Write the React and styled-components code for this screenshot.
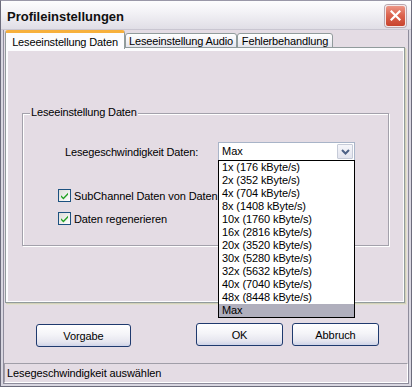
import React from 'react';
import styled, { createGlobalStyle } from 'styled-components';

const LAV = '#e4dce4';
const FONT = '"Liberation Sans", Arial, sans-serif';

const Global = createGlobalStyle`
  html, body { margin: 0; padding: 0; background: #ffffff; }
  body { font-family: ${FONT}; font-size: 11px; color: #000; }
  * { box-sizing: border-box; }
`;

const Window = styled.div`
  width: 412px;
  height: 387px;
  display: flex;
  flex-direction: column;
  border: 1px solid #6c6c7c;
  border-top-color: #9a98a8;
  background: #d8d6e0;
  padding: 0 2px 2px;
`;

const TitleBar = styled.div`
  height: 29px;
  margin: 0 -2px;
  display: flex;
  align-items: center;
  justify-content: space-between;
  padding: 0 5px 0 6px;
  background: linear-gradient(#fdfdfe 0%, #f3f2f6 40%, #e0dee6 100%);
  border-bottom: 1px solid #c9c6d1;
`;

const Title = styled.div`
  font-family: ${FONT};
  font-weight: bold;
  font-size: 13px;
  color: #101010;
  padding-top: 2px;
`;

const CloseButton = styled.div`
  width: 21px;
  height: 22px;
  margin-top: 1px;
  border-radius: 3px;
  border: 1px solid #f4e8e8;
  box-shadow: 0 0 0 1px #b9a8b0;
  background: linear-gradient(#ec9686 0%, #dc6550 45%, #c8432d 100%);
  display: flex;
  align-items: center;
  justify-content: center;
`;

const Body = styled.div`
  flex: 1;
  display: flex;
  flex-direction: column;
  background: ${LAV};
  border: 1px solid #8e8c9c;
  border-top: none;
`;

const TabRow = styled.div`
  height: 18px;
  display: flex;
  align-items: flex-end;
  padding-left: 1px;
  position: relative;
  z-index: 2;
`;

const Tab = styled.div`
  width: ${p => p.$w}px;
  height: ${p => (p.$active ? 19 : 15)}px;
  margin-bottom: ${p => (p.$active ? -1 : 0)}px;
  display: flex;
  align-items: center;
  justify-content: center;
  padding-top: ${p => (p.$active ? 2 : 1)}px;
  border: 1px solid #919b9c;
  border-bottom: ${p => (p.$active ? 'none' : '1px solid #919b9c')};
  border-top: ${p => (p.$active ? '3px solid #f7b03c' : '1px solid #919b9c')};
  border-radius: 3px 3px 0 0;
  background: ${p => (p.$active ? '#fcfcfe' : 'linear-gradient(#ffffff, #f3f3f7 50%, #e4e4ec)')};
  white-space: nowrap;
  letter-spacing: -0.15px;
`;

const Panel = styled.div`
  width: 400px;
  height: 256px;
  margin: -1px 0 0 1px;
  border: 1px solid #919b9c;
  background: #fcfcfe;
  padding: 3px 1px 1px 2px;
  box-shadow: 1px 1px 0 #d2d0b8, 2px 2px 0 #e2e0d2;
  display: flex;
  position: relative;
  z-index: 1;
`;

const PanelInner = styled.div`
  flex: 1;
  background: ${LAV};
  padding: 62px 0 0 14px;
`;

const GroupBox = styled.div`
  position: relative;
  width: 367px;
  height: 133px;
  border: 1px solid #a3a1ab;
  box-shadow: 1px 1px 0 #ffffff, inset 1px 1px 0 #ffffff;
  display: flex;
  flex-direction: column;
  padding: 28px 0 0 0;
`;

const GroupLegend = styled.div`
  position: absolute;
  left: 7px;
  top: -8px;
  padding: 0 1px;
  background: ${LAV};
  line-height: 13px;
  letter-spacing: -0.15px;
`;

const FieldRow = styled.div`
  display: flex;
  align-items: center;
  height: 19px;
  padding-left: 42px;
`;

const FieldLabel = styled.div`
  width: 153px;
  letter-spacing: -0.15px;
  padding-top: 1px;
`;

const Combo = styled.div`
  position: relative;
  width: 137px;
  height: 19px;
  border: 1px solid #a8b4c8;
  background: #fff;
  display: flex;
  align-items: center;
  padding: 1px;
  z-index: 5;
`;

const ComboValue = styled.div`
  flex: 1;
  padding-left: 2px;
  line-height: 15px;
`;

const ComboButton = styled.div`
  width: 16px;
  height: 15px;
  border: 1px solid #c6cbd8;
  border-radius: 1px;
  background: linear-gradient(#f6f6fa, #e2e4ee);
  display: flex;
  align-items: center;
  justify-content: center;
`;

const List = styled.div`
  position: absolute;
  top: 17px;
  left: -1px;
  width: 137px;
  border: 1px solid #000;
  background: #fff;
  padding: 0;
`;

const ListItem = styled.div`
  height: 13px;
  line-height: 13px;
  padding-left: 3px;
  white-space: nowrap;
  letter-spacing: -0.1px;
  background: ${p => (p.$selected ? '#b0afbd' : 'transparent')};
`;

const CheckRow = styled.div`
  display: flex;
  align-items: center;
  height: 13px;
  padding-left: 35px;
  margin-top: ${p => p.$mt}px;
  white-space: nowrap;
  letter-spacing: -0.1px;
`;

const CheckBox = styled.div`
  width: 13px;
  height: 13px;
  flex: none;
  border: 1px solid #1c5180;
  background: linear-gradient(135deg, #dcdcd7, #ffffff);
  display: flex;
  align-items: center;
  justify-content: center;
  margin-right: 3px;
`;

const ButtonRow = styled.div`
  display: flex;
  align-items: flex-start;
  margin-top: 20px;
  height: 24px;
  padding-left: 32px;
`;

const Button = styled.div`
  width: ${p => p.$w}px;
  height: 23px;
  margin-top: ${p => p.$mt || 0}px;
  margin-right: ${p => p.$mr || 0}px;
  border: 1px solid #1f3a6e;
  border-radius: 3px;
  background: linear-gradient(#ffffff 0%, #f4f4f8 45%, #e6e6ef 80%, #cfd4e8 100%);
  display: flex;
  align-items: center;
  justify-content: center;
  letter-spacing: -0.1px;
`;

const StatusBar = styled.div`
  margin-top: 16px;
  height: 20px;
  border: 1px solid;
  border-color: #a09ea8 #ffffff #ffffff #a09ea8;
  display: flex;
  align-items: center;
  padding-left: 2px;
  letter-spacing: -0.1px;
`;

const speeds = [
  '1x (176 kByte/s)', '2x (352 kByte/s)', '4x (704 kByte/s)', '8x (1408 kByte/s)',
  '10x (1760 kByte/s)', '16x (2816 kByte/s)', '20x (3520 kByte/s)', '30x (5280 kByte/s)',
  '32x (5632 kByte/s)', '40x (7040 kByte/s)', '48x (8448 kByte/s)', 'Max',
];

const Check = () => (
  <svg width="9" height="9" viewBox="0 0 9 9">
    <path d="M1 4.2 L3.4 6.6 L8 1.8 L8 3.8 L3.4 8.4 L1 6 Z" fill="#21a121" />
  </svg>
);

export default function App() {
  return (
    <>
      <Global />
      <Window>
        <TitleBar>
          <Title>Profileinstellungen</Title>
          <CloseButton>
            <svg width="11" height="11" viewBox="0 0 11 11">
              <path d="M1.5 1.5 L9.5 9.5 M9.5 1.5 L1.5 9.5" stroke="#ffffff" strokeWidth="2.2" strokeLinecap="square" />
            </svg>
          </CloseButton>
        </TitleBar>
        <Body>
          <TabRow>
            <Tab $active $w={120}>Leseeinstellung Daten</Tab>
            <Tab $w={112}>Leseeinstellung Audio</Tab>
            <Tab $w={96}>Fehlerbehandlung</Tab>
          </TabRow>
          <Panel>
            <PanelInner>
              <GroupBox>
                <GroupLegend>Leseeinstellung Daten</GroupLegend>
                <FieldRow>
                  <FieldLabel>Lesegeschwindigkeit Daten:</FieldLabel>
                  <Combo>
                    <ComboValue>Max</ComboValue>
                    <ComboButton>
                      <svg width="9" height="6" viewBox="0 0 9 6">
                        <path d="M1 1 L4.5 4.5 L8 1" stroke="#4d6185" strokeWidth="2" fill="none" />
                      </svg>
                    </ComboButton>
                    <List>
                      {speeds.map(s => (
                        <ListItem key={s} $selected={s === 'Max'}>{s}</ListItem>
                      ))}
                    </List>
                  </Combo>
                </FieldRow>
                <CheckRow $mt={28}>
                  <CheckBox><Check /></CheckBox>
                  SubChannel Daten von Daten
                </CheckRow>
                <CheckRow $mt={10}>
                  <CheckBox><Check /></CheckBox>
                  Daten regenerieren
                </CheckRow>
              </GroupBox>
            </PanelInner>
          </Panel>
          <ButtonRow>
            <Button $w={95} $mt={1} $mr={65}>Vorgabe</Button>
            <Button $w={87} $mr={9}>OK</Button>
            <Button $w={87}>Abbruch</Button>
          </ButtonRow>
          <StatusBar>Lesegeschwindigkeit auswählen</StatusBar>
        </Body>
      </Window>
    </>
  );
}
